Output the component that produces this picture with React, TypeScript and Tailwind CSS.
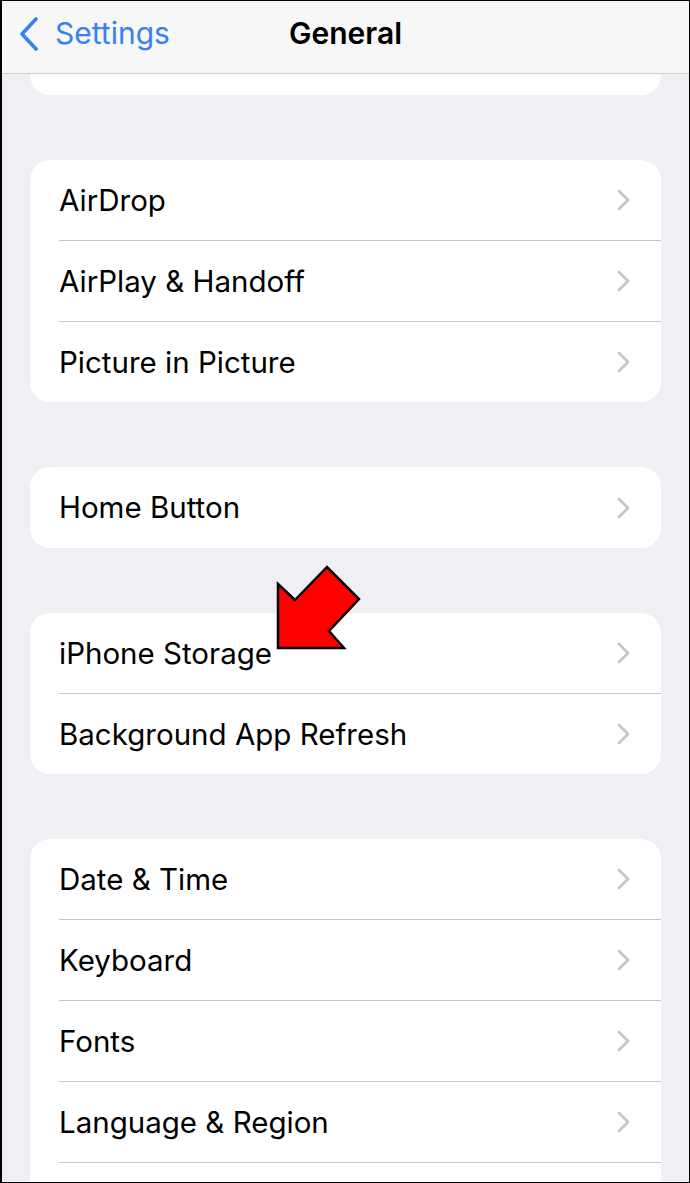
/* Settings › General — iOS list screen */
type Group = string[]

const GROUPS: Group[] = [
  ['AirDrop', 'AirPlay & Handoff', 'Picture in Picture'],
  ['Home Button'],
  ['iPhone Storage', 'Background App Refresh'],
  ['Date & Time', 'Keyboard', 'Fonts', 'Language & Region', ''],
]

function Chevron() {
  return (
    <svg width="13" height="22" viewBox="0 0 13 22" className="shrink-0">
      <polyline
        points="2,2 11,11 2,20"
        fill="none"
        stroke="#c4c4c7"
        strokeWidth="2.6"
        strokeLinecap="round"
        strokeLinejoin="round"
      />
    </svg>
  )
}

function Row({ label, last, single }: { label: string; last: boolean; single: boolean }) {
  return (
    <div className="pl-[29px]">
      <div
        className={`flex items-center justify-between pr-[31px] ${
          single ? 'h-[81px]' : last ? 'h-[80px]' : 'h-[81px] border-b border-[#c8c7cc]'
        }`}
      >
        <span className="text-[29.5px] text-black">{label}</span>
        {label && <Chevron />}
      </div>
    </div>
  )
}

function Card({ rows }: { rows: Group }) {
  return (
    <div className="bg-white rounded-[20px] overflow-hidden">
      {rows.map((r, i) => (
        <Row key={i} label={r} last={i === rows.length - 1} single={rows.length === 1} />
      ))}
    </div>
  )
}

export default function App() {
  return (
    <div
      className="relative w-[690px] h-[1183px] overflow-hidden bg-[#efeff4] border-l-2 border-r border-t border-b border-black"
      style={{ fontFamily: 'Inter, "Noto Sans", sans-serif' }}
    >
      {/* Nav bar */}
      <header className="h-[73px] bg-[#f7f7f7] border-b border-[#cfcfd2] relative flex items-center pb-[7px]">
        <div className="flex items-center text-[#3680f5] pl-[16px]">
          <svg width="22" height="34" viewBox="0 0 22 34">
            <polyline
              points="18,2 4,17 18,32"
              fill="none"
              stroke="#3680f5"
              strokeWidth="3.6"
              strokeLinecap="round"
              strokeLinejoin="round"
            />
          </svg>
          <span className="text-[30px] ml-[15px]">Settings</span>
        </div>
        <span className="absolute left-0 right-0 text-center text-[30px] font-semibold text-black">
          General
        </span>
      </header>

      <div className="px-[28px] flex flex-col">
        {/* tail of the previous group, scrolled under the bar */}
        <div className="h-[21px] bg-white rounded-b-[20px]" />

        <div className="flex flex-col gap-[65px] mt-[65px]">
          {GROUPS.map((g, i) => (
            <Card key={i} rows={g} />
          ))}
        </div>
      </div>

      {/* callout arrow */}
      <svg className="absolute left-0 top-0" width="690" height="1183" viewBox="0 0 690 1183">
        <polygon
          points="276,583 293,599 325,566 357,598 327,630 342,647 276,647"
          fill="#ff0000"
          stroke="#000"
          strokeWidth="2.5"
          strokeLinejoin="miter"
        />
      </svg>
    </div>
  )
}
